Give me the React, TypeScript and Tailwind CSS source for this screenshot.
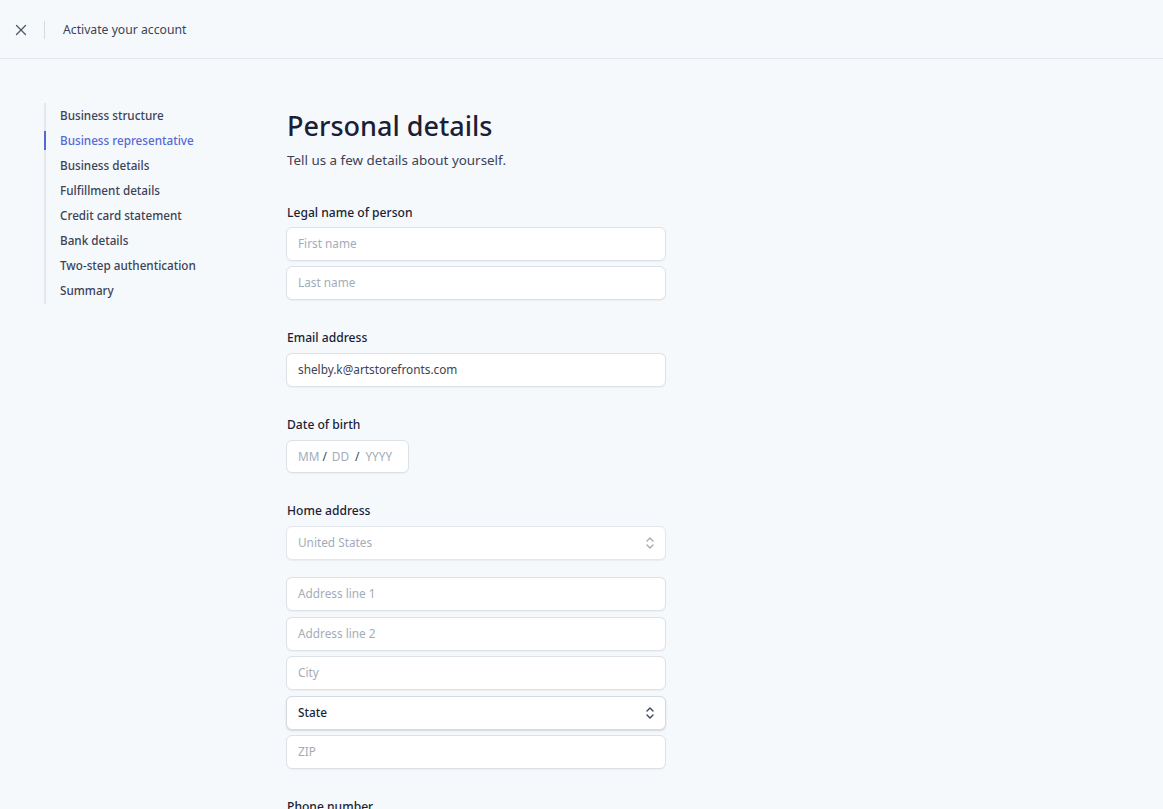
import React from 'react';
import { X } from 'lucide-react';

const steps = [
  'Business structure',
  'Business representative',
  'Business details',
  'Fulfillment details',
  'Credit card statement',
  'Bank details',
  'Two-step authentication',
  'Summary',
];

const fieldBox =
  'h-[34px] w-full rounded-[6px] border border-[#dde1e8] bg-white px-[11px] flex items-center text-[11.8px] shadow-[0_1px_1px_rgba(0,0,0,0.04)]';

// small up/down chevrons used on the select boxes
const UpDown: React.FC<{ color: string }> = ({ color }) => (
  <svg width="10" height="14" viewBox="0 0 10 14" fill="none">
    <path d="M2 5l3-3 3 3" stroke={color} strokeWidth="1.4" strokeLinecap="round" strokeLinejoin="round" />
    <path d="M2 9l3 3 3-3" stroke={color} strokeWidth="1.4" strokeLinecap="round" strokeLinejoin="round" />
  </svg>
);

const Field: React.FC<{ placeholder?: string; value?: string }> = ({ placeholder, value }) => (
  <div className={fieldBox}>
    {value ? (
      <span className="text-[#3c4257]">{value}</span>
    ) : (
      <span className="text-[#a3acb9]">{placeholder}</span>
    )}
  </div>
);

const Select: React.FC<{ text: string; muted?: boolean }> = ({ text, muted }) => (
  <div
    className={
      'h-[34px] w-full rounded-[6px] border bg-white pl-[11px] pr-[10px] flex items-center justify-between text-[11.8px] ' +
      (muted
        ? 'border-[#e3e6ec] shadow-[0_1px_1px_rgba(0,0,0,0.05)]'
        : 'border-[#d5d9e0] shadow-[0_1px_2px_rgba(0,0,0,0.14)]')
    }
  >
    <span className={muted ? 'text-[#a3acb9]' : 'text-[#1a1f36] font-medium'}>{text}</span>
    <UpDown color={muted ? '#a3acb9' : '#3c4257'} />
  </div>
);

const Label: React.FC<{ children: React.ReactNode; tight?: boolean }> = ({ children, tight }) => (
  <div
    className={
      'pt-[1px] pl-[1px] text-[12.1px] font-medium leading-[20px] text-[#1a1f36] ' +
      (tight ? 'mb-[4px]' : 'mb-[5px]')
    }
  >
    {children}
  </div>
);

export default function App() {
  return (
    <div
      className="min-h-screen bg-[#f6f9fc] text-[#3c4257]"
      style={{ fontFamily: '"Noto Sans", "Open Sans", sans-serif' }}
    >
      <header className="h-[59px] border-b border-[#e3e8ee] flex items-center pt-[2px]">
        <div className="w-[44px] flex justify-center pr-[3px]">
          <X size={18} strokeWidth={1.7} className="text-[#4f566b]" />
        </div>
        <div className="h-[18px] w-px bg-[#d5d9e0]" />
        <div className="ml-[18px] text-[12.2px] text-[#3c4257]">Activate your account</div>
      </header>

      <div className="flex pl-[44px] pt-[46px]">
        <nav className="w-[242px] shrink-0">
          <ul className="-mt-[2px] border-l-2 border-[#e3e8ee]">
            {steps.map((s) => {
              const active = s === 'Business representative';
              return (
                <li
                  key={s}
                  className={
                    'relative pl-[14px] h-[25.1px] flex items-center text-[11.7px] font-medium ' +
                    (active ? 'text-[#5469d4]' : 'text-[#3c4257]')
                  }
                >
                  {active && <span className="absolute -left-[2px] top-[3px] bottom-[3px] w-[2px] bg-[#5469d4]" />}
                  {s}
                </li>
              );
            })}
          </ul>
        </nav>

        <main className="w-[380px] pb-10">
          <h1 className="text-[27px] leading-[34px] font-medium text-[#1a1f36] mt-[4px] ml-[1px]">
            Personal details
          </h1>
          <p className="mt-[7px] ml-[1px] text-[13.4px] leading-[20px] text-[#3c4257]">
            Tell us a few details about yourself.
          </p>

          <section className="mt-[32px]">
            <Label tight>Legal name of person</Label>
            <div className="flex flex-col gap-[5px]">
              <Field placeholder="First name" />
              <Field placeholder="Last name" />
            </div>
          </section>

          <section className="mt-[27px]">
            <Label>Email address</Label>
            <Field value="shelby.k@artstorefronts.com" />
          </section>

          <section className="mt-[27px]">
            <Label>Date of birth</Label>
            <div className="h-[33px] w-[123px] rounded-[6px] border border-[#dde1e8] bg-white px-[11px] flex items-center text-[11.8px] shadow-[0_1px_1px_rgba(0,0,0,0.04)]">
              <span className="text-[#a3acb9]">MM</span>
              <span className="mx-[3px] text-[#3c4257]">/</span>
              <span className="ml-[2px] text-[#a3acb9]">DD</span>
              <span className="mx-[6px] text-[#3c4257]">/</span>
              <span className="text-[#a3acb9]">YYYY</span>
            </div>
          </section>

          <section className="mt-[27px]">
            <Label>Home address</Label>
            <Select text="United States" muted />
            <div className="mt-[17px] flex flex-col gap-[5.5px]">
              <Field placeholder="Address line 1" />
              <Field placeholder="Address line 2" />
              <Field placeholder="City" />
              <Select text="State" />
              <Field placeholder="ZIP" />
            </div>
          </section>

          <section className="mt-[27px]">
            <Label>Phone number</Label>
            <Field placeholder="(555) 555-5555" />
          </section>
        </main>
      </div>
    </div>
  );
}
